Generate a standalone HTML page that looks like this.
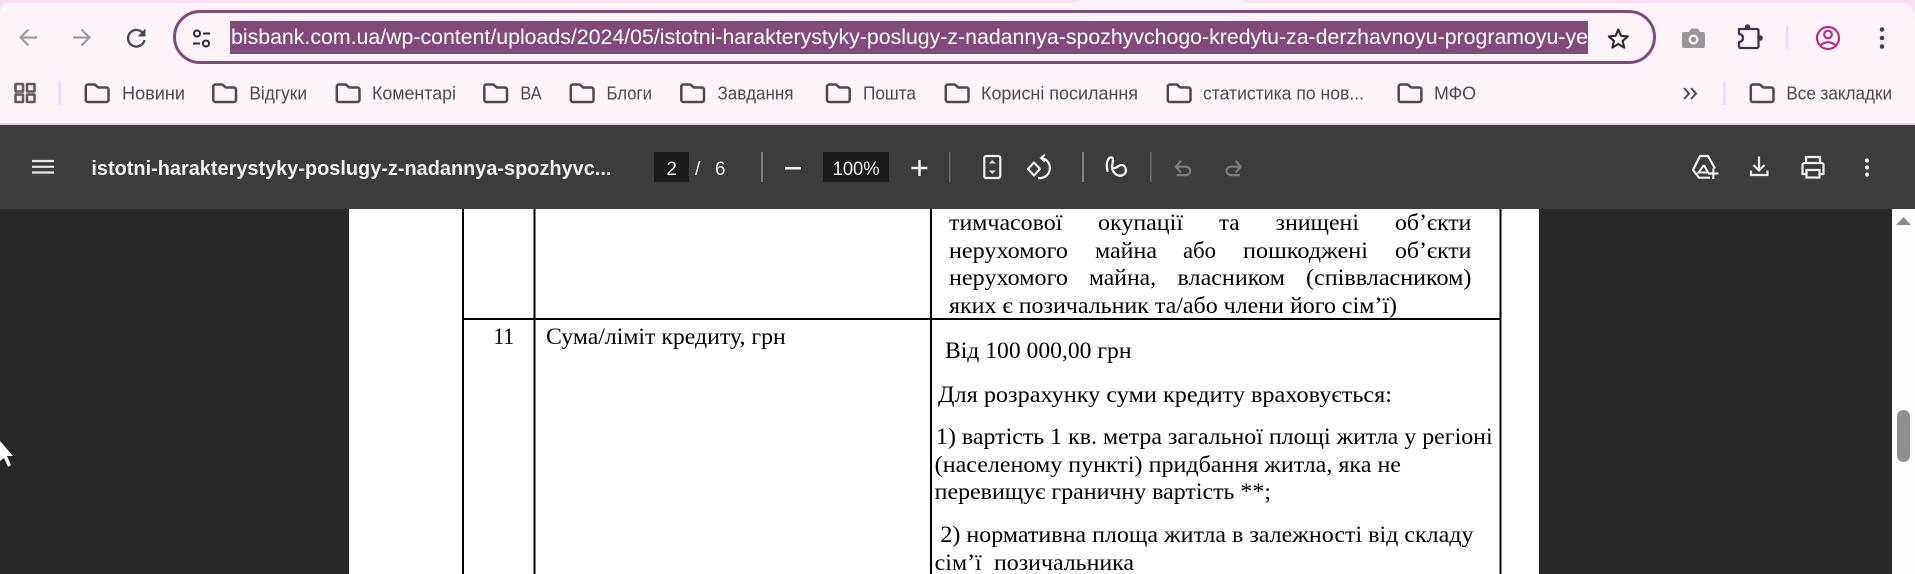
<!DOCTYPE html>
<html lang="uk">
<head>
<meta charset="utf-8">
<title>PDF</title>
<style>
html,body{margin:0;padding:0;width:1915px;height:574px;overflow:hidden;background:#282828}
svg{display:block}
.s{font-family:"Liberation Sans",sans-serif}
.bm{font-family:"Liberation Sans",sans-serif;font-size:18.5px;fill:#4d4850}
.t{font-family:"Liberation Serif",serif;font-size:23px;fill:#000}
</style>
</head>
<body>
<svg xmlns="http://www.w3.org/2000/svg" width="1915" height="574" viewBox="0 0 1915 574">
<defs>
<path id="f" d="M1.300 3a2 2 0 0 1 2-2h7l3.500 3h8.200a2 2 0 0 1 2 2v10.500a2 2 0 0 1-2 2H3.300a2 2 0 0 1-2-2z" fill="none" stroke="#4f4a50" stroke-width="2.500" stroke-linejoin="round"/>
</defs>
<!-- chrome -->
<rect width="1915" height="125" fill="#f9dff3"/>
<path d="M0 13q0-10 10-10H1075l6-3H1242l6 3H1900q15 0 15 15V123H0z" fill="#fff4fa"/>
<rect y="123" width="1915" height="2" fill="#dcd6da"/>
<!-- nav icons -->
<g fill="none" stroke="#a09aa0" stroke-width="2.200">
<path d="M37 37.500H20.500M28.500 29.500l-8 8 8 8"/>
<path d="M73 37.500H89.500M81.500 29.500l8 8-8 8"/>
</g>
<path d="M143.500 34a8.300 8.300 0 1 0 1 6" fill="none" stroke="#4d484d" stroke-width="2.300"/>
<path d="M145.500 28.500v8h-8z" fill="#4d484d"/>
<!-- address bar -->
<rect x="174.500" y="11.500" width="1480" height="51" rx="25.500" fill="#fff4fa" stroke="#824a7b" stroke-width="3"/>
<g fill="none" stroke="#2f2a30" stroke-width="2">
<circle cx="197" cy="33.500" r="3"/><path d="M203 33.500h7M193 43.500h7"/><circle cx="206" cy="43.500" r="3"/>
</g>
<rect x="230" y="21" width="1358" height="33" fill="#824a7b"/>
<text class="s" x="231" y="44" font-size="21.500" fill="#fff" textLength="1357" lengthAdjust="spacingAndGlyphs">bisbank.com.ua/wp-content/uploads/2024/05/istotni-harakterystyky-poslugy-z-nadannya-spozhyvchogo-kredytu-za-derzhavnoyu-programoyu-ye</text>
<path d="M1618.300 29.500l2.700 6.300 6.800.6-5.200 4.500 1.600 6.700-5.900-3.600-5.900 3.600 1.600-6.700-5.200-4.500 6.800-.6z" fill="none" stroke="#2f2a30" stroke-width="2.100" stroke-linejoin="round"/>
<!-- right icons -->
<path d="M1684 32h5l2-3.500h7l2 3.500h3a2 2 0 0 1 2 2v12a2 2 0 0 1-2 2h-19a2 2 0 0 1-2-2V34a2 2 0 0 1 2-2z" fill="#9a979a"/>
<circle cx="1693.500" cy="39.500" r="5" fill="#fff4fa"/><circle cx="1693.500" cy="39.500" r="2.700" fill="#9a979a"/>
<path d="M1739 29H1757a1.500 1.500 0 0 1 1.500 1.500V46.500a1.500 1.500 0 0 1-1.500 1.500H1740.500a1.500 1.500 0 0 1-1.500-1.500V42q4-.5 4-4t-4-4z" fill="none" stroke="#4a2f4c" stroke-width="2.300" stroke-linejoin="round"/>
<circle cx="1747.500" cy="27" r="2.800" fill="#4a2f4c"/><circle cx="1760" cy="38" r="2.800" fill="#4a2f4c"/>
<rect x="1786" y="26" width="2.500" height="23" fill="#fbd2ef"/>
<g fill="none" stroke="#bb2a8c" stroke-width="2.200">
<circle cx="1828" cy="38" r="11"/><circle cx="1828" cy="34.500" r="3.800"/><path d="M1820 45.500q8-6.500 16 0"/>
</g>
<g fill="#4f3a50"><circle cx="1882" cy="29.500" r="2.300"/><circle cx="1882" cy="38" r="2.300"/><circle cx="1882" cy="46.500" r="2.300"/></g>
<!-- bookmarks bar -->
<g fill="none" stroke="#5f5a5f" stroke-width="2.600">
<rect x="15.500" y="84" width="7.500" height="7.500" rx=".5"/><rect x="27" y="84" width="7.500" height="7.500" rx=".5"/>
<rect x="15.500" y="94.500" width="7.500" height="7.500" rx=".5"/><rect x="27" y="94.500" width="7.500" height="7.500" rx=".5"/>
</g>
<rect x="58.300" y="81" width="2.700" height="24" rx="1" fill="#fbd2ef"/>
<use href="#f" x="84.500" y="83.500"/><text class="bm" x="122" y="99.500" textLength="63" lengthAdjust="spacingAndGlyphs">Новини</text>
<use href="#f" x="212" y="83.500"/><text class="bm" x="249.400" y="99.500" textLength="57.600" lengthAdjust="spacingAndGlyphs">Відгуки</text>
<use href="#f" x="335.500" y="83.500"/><text class="bm" x="372" y="99.500" textLength="84" lengthAdjust="spacingAndGlyphs">Коментарі</text>
<use href="#f" x="483" y="83.500"/><text class="bm" x="520.400" y="99.500" textLength="21.200" lengthAdjust="spacingAndGlyphs">ВА</text>
<use href="#f" x="569.500" y="83.500"/><text class="bm" x="606.500" y="99.500" textLength="45.500" lengthAdjust="spacingAndGlyphs">Блоги</text>
<use href="#f" x="680" y="83.500"/><text class="bm" x="717.500" y="99.500" textLength="76" lengthAdjust="spacingAndGlyphs">Завдання</text>
<use href="#f" x="825.700" y="83.500"/><text class="bm" x="863" y="99.500" textLength="53" lengthAdjust="spacingAndGlyphs">Пошта</text>
<use href="#f" x="944.500" y="83.500"/><text class="bm" x="981" y="99.500" textLength="157" lengthAdjust="spacingAndGlyphs">Корисні посилання</text>
<use href="#f" x="1166.500" y="83.500"/><text class="bm" x="1203" y="99.500" textLength="161" lengthAdjust="spacingAndGlyphs">статистика по нов...</text>
<use href="#f" x="1397.400" y="83.500"/><text class="bm" x="1434" y="99.500" textLength="42" lengthAdjust="spacingAndGlyphs">МФО</text>
<path d="M1684 88l5 5.500-5 5.500M1691 88l5 5.500-5 5.500" fill="none" stroke="#4d484d" stroke-width="2"/>
<rect x="1723" y="81" width="2.700" height="24" rx="1" fill="#fbd2ef"/>
<use href="#f" x="1749.500" y="83.500"/><text class="bm" x="1786.400" y="99.500" textLength="105.600" lengthAdjust="spacingAndGlyphs">Все закладки</text>

<!-- PDF toolbar -->
<rect y="125" width="1915" height="84" fill="#3c3c3c"/>
<g stroke="#e6e6e6" stroke-width="2.200"><path d="M32 161h22M32 166.800h22M32 172.500h22"/></g>
<text class="s" x="91.400" y="175" font-size="20" font-weight="700" fill="#f1f1f1" textLength="520" lengthAdjust="spacingAndGlyphs">istotni-harakterystyky-poslugy-z-nadannya-spozhyvc...</text>
<rect x="654" y="152" width="35" height="30" fill="#1c1c1c"/>
<text class="s" x="666.500" y="175" font-size="19" fill="#f1f1f1" textLength="10.500" lengthAdjust="spacingAndGlyphs">2</text>
<text class="s" x="695" y="175" font-size="19" fill="#f1f1f1">/</text>
<text class="s" x="715" y="175" font-size="19" fill="#f1f1f1" textLength="10.500" lengthAdjust="spacingAndGlyphs">6</text>
<rect x="761" y="152" width="2" height="30" fill="#808080"/>
<rect x="785" y="167" width="16" height="2.500" fill="#f1f1f1"/>
<rect x="823" y="152" width="66" height="30" fill="#1c1c1c"/>
<text class="s" x="832.600" y="175" font-size="19.500" fill="#f1f1f1" textLength="47" lengthAdjust="spacingAndGlyphs">100%</text>
<path d="M911.500 168h16M919.500 160v16" stroke="#f1f1f1" stroke-width="2.500"/>
<rect x="949" y="152" width="1.500" height="30" fill="#6c6c6c"/>
<!-- fit -->
<rect x="984.300" y="156" width="16" height="22" rx="2" fill="none" stroke="#f0f0f0" stroke-width="2.200"/>
<path d="M992.300 160l3.500 3.500h-7zM992.300 174l3.500-3.500h-7z" fill="#e0e0e0"/>
<!-- rotate -->
<path d="M1034 162.500l-6 6.500 6 6.500 6-6.500z" fill="none" stroke="#f0f0f0" stroke-width="2.200" stroke-linejoin="round"/>
<path d="M1041.500 158a10 10 0 1 1-3.500 20" fill="none" stroke="#f0f0f0" stroke-width="2.200"/>
<path d="M1045 154.500l-4 3.500 4 3.500" fill="none" stroke="#f0f0f0" stroke-width="2"/>
<rect x="1082" y="152" width="2" height="30" fill="#808080"/>
<!-- draw -->
<path d="M1107.500 171C1105.500 163 1108 157 1111.500 157.500C1115.500 158.500 1110 166 1113 171C1116 176 1121 177 1124.500 174C1127 171.500 1126 165.500 1122 165C1118 164.500 1117 169 1113.500 168" fill="none" stroke="#f0f0f0" stroke-width="2.300" stroke-linecap="round"/>
<rect x="1150" y="152" width="1.500" height="30" fill="#6c6c6c"/>
<!-- undo/redo -->
<g fill="none" stroke="#7d7d7d" stroke-width="2.200">
<path d="M1181 160.700l-5 6 5 6M1176.500 166.700h9.500a4.200 4.200 0 0 1 0 8.400h-9.300"/>
<path d="M1235.700 160.700l5 6-5 6M1240.200 166.700h-9.500a4.200 4.200 0 0 0 0 8.400h9.300"/>
</g>
<!-- drive -->
<path d="M1715 168.500L1708 156H1700L1693 170L1699 177.700H1710" fill="none" stroke="#f0f0f0" stroke-width="2.200" stroke-linejoin="round"/>
<path d="M1704 165l-5.500 7.500h9.500l-4-7.500" fill="none" stroke="#f0f0f0" stroke-width="2"/>
<path d="M1708 173.500h10.500M1713.300 168.500v10.500" stroke="#f0f0f0" stroke-width="2.200"/>
<!-- download -->
<path d="M1759 156.500v14M1753.500 165l5.500 5.500 5.500-5.500M1751 170.500v4.500h16.500v-4.500" fill="none" stroke="#f0f0f0" stroke-width="2.200"/>
<!-- print -->
<path d="M1806 163v-6h14v6M1806 174h-3.500v-9a2 2 0 0 1 2-2h17a2 2 0 0 1 2 2v9H1820" fill="none" stroke="#f0f0f0" stroke-width="2.200"/>
<rect x="1806.500" y="170" width="13" height="7.500" fill="none" stroke="#f0f0f0" stroke-width="2.200"/>
<g fill="#f0f0f0"><circle cx="1867" cy="160.500" r="2.100"/><circle cx="1867" cy="167.500" r="2.100"/><circle cx="1867" cy="174.500" r="2.100"/></g>

<!-- scrollbar -->
<rect x="1892" y="209" width="23" height="365" fill="#fdfdfd"/>
<path d="M1896 225l7.500-8 7.500 8z" fill="#8a8a8a"/>
<rect x="1897" y="410" width="13" height="52" rx="6.500" fill="#8e8e8e"/>

<!-- page -->
<rect x="349" y="209" width="1190" height="365" fill="#fff"/>
<g fill="#000">
<rect x="462" y="209" width="2" height="365"/>
<rect x="533.500" y="209" width="2" height="365"/>
<rect x="930" y="209" width="2" height="365"/>
<rect x="1499.500" y="209" width="2" height="365"/>
<rect x="462" y="318" width="1039" height="2"/>
</g>
<text class="t" x="949" y="230" textLength="113.400" lengthAdjust="spacingAndGlyphs">тимчасової</text>
<text class="t" x="1098" y="230" textLength="85" lengthAdjust="spacingAndGlyphs">окупації</text>
<text class="t" x="1219" y="230" textLength="20.600" lengthAdjust="spacingAndGlyphs">та</text>
<text class="t" x="1275.500" y="230" textLength="83.500" lengthAdjust="spacingAndGlyphs">знищені</text>
<text class="t" x="1395" y="230" textLength="76.400" lengthAdjust="spacingAndGlyphs">об’єкти</text>
<text class="t" x="949" y="258" textLength="119" lengthAdjust="spacingAndGlyphs">нерухомого</text>
<text class="t" x="1095" y="258" textLength="62" lengthAdjust="spacingAndGlyphs">майна</text>
<text class="t" x="1183" y="258" textLength="33" lengthAdjust="spacingAndGlyphs">або</text>
<text class="t" x="1243" y="258" textLength="125" lengthAdjust="spacingAndGlyphs">пошкоджені</text>
<text class="t" x="1395" y="258" textLength="76.400" lengthAdjust="spacingAndGlyphs">об’єкти</text>
<text class="t" x="949" y="285" textLength="119" lengthAdjust="spacingAndGlyphs">нерухомого</text>
<text class="t" x="1089" y="285" textLength="67" lengthAdjust="spacingAndGlyphs">майна,</text>
<text class="t" x="1177.500" y="285" textLength="107.500" lengthAdjust="spacingAndGlyphs">власником</text>
<text class="t" x="1306" y="285" textLength="165.400" lengthAdjust="spacingAndGlyphs">(співвласником)</text>
<text class="t" x="949" y="313" textLength="448" lengthAdjust="spacingAndGlyphs">яких є позичальник та/або члени його сім’ї)</text>
<text class="t" x="493.500" y="344" textLength="20.500" lengthAdjust="spacingAndGlyphs">11</text>
<text class="t" x="546" y="344" textLength="239.700" lengthAdjust="spacingAndGlyphs">Сума/ліміт кредиту, грн</text>
<text class="t" x="945" y="358" textLength="186.500" lengthAdjust="spacingAndGlyphs">Від 100 000,00 грн</text>
<text class="t" x="938" y="402" textLength="454" lengthAdjust="spacingAndGlyphs">Для розрахунку суми кредиту враховується:</text>
<text class="t" x="936" y="444" textLength="556.600" lengthAdjust="spacingAndGlyphs">1) вартість 1 кв. метра загальної площі житла у регіоні</text>
<text class="t" x="934.700" y="472" textLength="466.300" lengthAdjust="spacingAndGlyphs">(населеному пункті) придбання житла, яка не</text>
<text class="t" x="934.700" y="499" textLength="336.300" lengthAdjust="spacingAndGlyphs">перевищує граничну вартість **;</text>
<text class="t" x="940.400" y="542" textLength="533.100" lengthAdjust="spacingAndGlyphs">2) нормативна площа житла в залежності від складу</text>
<text class="t" x="934.700" y="570" textLength="47" lengthAdjust="spacingAndGlyphs">сім’ї</text>
<text class="t" x="994" y="570" textLength="140" lengthAdjust="spacingAndGlyphs">позичальника</text>

<!-- cursor -->
<path d="M0 441l13 15h-6l4 9-3 2-4-9-4 3z" fill="#fff"/>
</svg>
</body>
</html>
